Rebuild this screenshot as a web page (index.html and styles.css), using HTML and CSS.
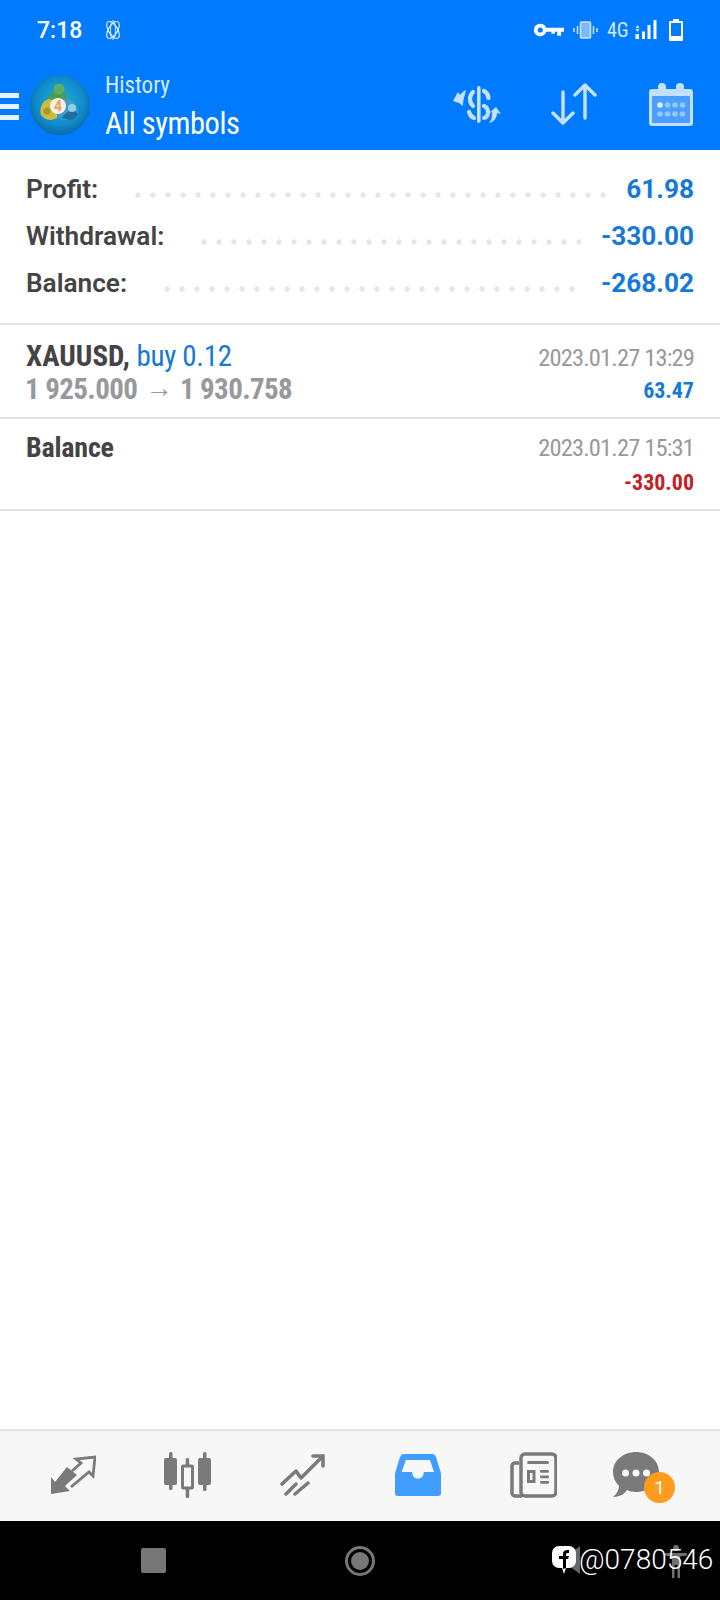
FILE: index.html
```html
<!DOCTYPE html>
<html lang="en">
<head>
<meta charset="UTF-8">
<meta name="viewport" content="width=device-width, initial-scale=1.0">
<title>History</title>
<link rel="stylesheet" href="styles.css">
</head>
<body>
<header class="top">
    <div class="status">
        <span class="time">7:18</span>
        <svg class="atom" width="20" height="20" viewBox="0 0 20 20" fill="none" stroke="#fff" stroke-width="1">
            <ellipse cx="10" cy="10" rx="4.500" ry="9.500" transform="rotate(32 10 10)"/>
            <ellipse cx="10" cy="10" rx="4.500" ry="9.500" transform="rotate(-32 10 10)"/>
            <ellipse cx="10" cy="10" rx="2.500" ry="9.500" opacity="0.8"/>
        </svg>
        <div class="status-right">
            <svg width="30" height="14" viewBox="0 0 31 14" fill="#fff">
                <path d="M6.500 0.500a6.500 6.500 0 0 1 6.100 4.200H31v4h-3V13h-4V8.700h-2.500V11h-3.500V8.700h-5.400A6.500 6.500 0 1 1 6.500 0.500zm0 3.800a2.700 2.700 0 1 0 0 5.400 2.700 2.700 0 0 0 0-5.400z"/>
            </svg>
            <svg width="25" height="18" viewBox="0 0 25 18" fill="none" stroke="#cfe4ff" stroke-width="1.500">
                <rect x="7.500" y="1" width="10" height="16" rx="1" fill="#7db8ff"/>
                <path d="M4.500 5v8M1 7v4M20.500 5v8M24 7v4"/>
            </svg>
            <span class="net">4G</span>
            <svg width="22" height="20" viewBox="0 0 22 20" fill="#fff">
                <path d="M2.500 5l2 3h-4zM2.500 12l-2-3h4z" opacity="0.8"/>
                <rect x="0.500" y="14" width="3.500" height="5"/>
                <rect x="7" y="11.500" width="3" height="7.500"/>
                <rect x="12.500" y="5" width="3" height="14"/>
                <rect x="18.500" y="0" width="3" height="19"/>
            </svg>
            <svg class="batt" width="14" height="22" viewBox="0 0 14 22" fill="none">
                <path d="M4 0h6v2h3a1 1 0 0 1 1 1v18a1 1 0 0 1-1 1H1a1 1 0 0 1-1-1V3a1 1 0 0 1 1-1h3z" fill="#fff"/>
                <rect x="2" y="4" width="10" height="13" fill="#007aff"/>
            </svg>
        </div>
    </div>
    <div class="appbar">
        <div class="burger"><i></i><i></i><i></i></div>
        <svg class="logo" width="60" height="60" viewBox="0 0 60 60">
            <defs>
                <radialGradient id="disc" cx="50%" cy="45%" r="55%">
                    <stop offset="0" stop-color="#27b0dc"/>
                    <stop offset="0.7" stop-color="#0f8ccb"/>
                    <stop offset="1" stop-color="#0b6ca8"/>
                </radialGradient>
            </defs>
            <circle cx="30" cy="30" r="30" fill="url(#disc)"/>
            <path d="M17 30c0-9 5-14 11-14 7 0 12 5 12 14z" fill="#4d9c55"/>
            <circle cx="29" cy="14" r="5.500" fill="#5cae63"/>
            <path d="M11 40c-2-7 1-14 8-16l6 2 3 8-1 9-6 2c-4 0-8-2-10-5z" fill="#cdbb3f"/>
            <circle cx="17" cy="36" r="3.500" fill="#a8962c"/>
            <path d="M32 23c8-1 15 5 16 12 1 6-4 10-9 10-5 0-10-1-12-4l2-12z" fill="#3d9ccb"/>
            <path d="M32 43c2-4 6-7 10-7 3 0 5 1 6 3-2 4-5 6-9 6z" fill="#1f6f9e"/>
            <circle cx="42" cy="33" r="4" fill="#8fd0e8"/>
            <circle cx="28" cy="31" r="8" fill="#f6f0e6"/>
            <text class="logo-four" x="28" y="36" text-anchor="middle">4</text>
        </svg>
        <div class="titles">
            <div class="title-small">History</div>
            <div class="title-big">All symbols</div>
        </div>
        <div class="actions">
            <svg width="48" height="37" viewBox="8 10 48 37">
                <rect x="32" y="10" width="3.600" height="37" rx="1.800" fill="#c4e0ff"/>
                <g fill="none" stroke="#c4e0ff" stroke-width="4.200" stroke-linecap="round">
                    <path d="M28 16C24 20 24 26 28 30"/>
                    <path d="M39 15C41 16 43 18 43.500 22"/>
                    <path d="M24 36C25 39 26 41 29 42"/>
                    <path d="M39 30C43 31 44 37 42 40C41 41 40 42 39 42"/>
                </g>
                <g fill="#c4e0ff">
                    <path d="M21 14C20 19 18 23 18 30L14 27L8 25L13 16L15 19C17 17 18 15 21 14z"/>
                    <path d="M44 47C47 44 47 40 47 36L44 37L51 31L56 38L52 37C52 42 49 46 44 47z"/>
                </g>
            </svg>
            <svg class="updown" width="46" height="42" viewBox="0 0 46 42" fill="none" stroke="#c4e0ff" stroke-width="3.500" stroke-linecap="round" stroke-linejoin="round">
                <path d="M12 9v31M2 30l10 10 10-10"/>
                <path d="M34 2v33M24 12L34 2l10 10"/>
            </svg>
            <svg width="44" height="44" viewBox="0 0 44 44">
                <path d="M3 7h6V5a4 4 0 0 1 8 0v2h10V5a4 4 0 0 1 8 0v2h6a3 3 0 0 1 3 3v31a3 3 0 0 1-3 3H3a3 3 0 0 1-3-3V10a3 3 0 0 1 3-3z" fill="#c4e0ff"/>
                <rect x="3" y="14" width="38" height="27" rx="1" fill="#4a9eff"/>
                <g fill="#94c6ff">
                    <circle cx="11" cy="23" r="2.800" fill="#e0efff"/><circle cx="18.500" cy="23" r="2.800"/><circle cx="26" cy="23" r="2.800"/><circle cx="33.500" cy="23" r="2.800"/>
                    <circle cx="11" cy="32" r="2.800"/><circle cx="18.500" cy="32" r="2.800"/><circle cx="26" cy="32" r="2.800"/><circle cx="33.500" cy="32" r="2.800"/>
                </g>
            </svg>
        </div>
    </div>
</header>

<main class="content">
    <section class="summary">
        <div class="sum-row"><span class="sum-label">Profit:</span><span class="leader"></span><span class="sum-value">61.98</span></div>
        <div class="sum-row"><span class="sum-label">Withdrawal:</span><span class="leader"></span><span class="sum-value">-330.00</span></div>
        <div class="sum-row"><span class="sum-label">Balance:</span><span class="leader"></span><span class="sum-value">-268.02</span></div>
    </section>
    <div class="deal deal-first">
        <div class="deal-left">
            <div class="deal-name"><b>XAUUSD,</b> <span class="blue buy">buy 0.12</span></div>
            <div class="deal-price">1 925.000 <span class="arrow">→</span> 1 930.758</div>
        </div>
        <div class="deal-right">
            <div class="deal-date">2023.01.27 13:29</div>
            <div class="deal-sum blue">63.47</div>
        </div>
    </div>
    <div class="deal deal-second">
        <div class="deal-left">
            <div class="deal-name deal-balance"><b>Balance</b></div>
        </div>
        <div class="deal-right">
            <div class="deal-date">2023.01.27 15:31</div>
            <div class="deal-sum red">-330.00</div>
        </div>
    </div>
</main>

<nav class="tabs">
    <svg width="46" height="40" viewBox="9 10 46 40">
        <path d="M10 32L14 37L26 22L36 30L24 41L29 46L10 49z" fill="#7a7a7a"/>
        <path d="M30 42L48 27L52 31L54 12L35 14L40 18L31 26" fill="none" stroke="#7a7a7a" stroke-width="2.800"/>
    </svg>
    <svg width="48" height="46" viewBox="0 0 48 46" fill="#7a7a7a">
        <rect x="0" y="6" width="13" height="27" rx="2"/><rect x="5" y="0" width="3.500" height="38" rx="1.500"/>
        <rect x="34" y="6" width="13" height="27" rx="2"/><rect x="39" y="0" width="3.500" height="39" rx="1.500"/>
        <rect x="21.700" y="6" width="3.500" height="40" rx="1.500"/>
        <rect x="18.500" y="14" width="10" height="22" rx="1" fill="#f7f7f7" stroke="#7a7a7a" stroke-width="3"/>
    </svg>
    <svg width="46" height="42" viewBox="9 8 46 42" fill="none" stroke="#7a7a7a" stroke-width="3.500" stroke-linecap="round" stroke-linejoin="round">
        <path d="M11 38L25 25L30 32L50 12"/>
        <path d="M42 10H52V20" stroke-linejoin="miter"/>
        <path d="M15 48L25 38M24 48L37 37"/>
    </svg>
    <svg class="inbox" width="46" height="42" viewBox="0 0 46 42">
        <path d="M9 0h28c2 0 3 1 4 3l4 13c.6 2 1 3 1 5v18a3 3 0 0 1-3 3H3a3 3 0 0 1-3-3V21c0-2 .4-3 1-5L5 3c1-2 2-3 4-3z" fill="#3f9eff"/>
        <path d="M11 6h24l4 12H30c-1 0-1.500 .5-1.500 1.500 0 3-2.500 5-5.500 5s-5.500-2-5.500-5c0-1-.5-1.500-1.500-1.500H6.500z" fill="#f7f7f7"/>
    </svg>
    <svg width="48" height="46" viewBox="9 6 48 46">
        <rect x="21" y="8" width="35" height="42" rx="4" fill="none" stroke="#7a7a7a" stroke-width="3.500"/>
        <path d="M19 17H15a3 3 0 0 0-3 3V47a3 3 0 0 0 3 3H22" fill="none" stroke="#7a7a7a" stroke-width="3.500"/>
        <g fill="#7a7a7a">
            <rect x="27" y="15" width="22" height="3" rx="1.500"/>
            <path d="M27 24h8.500v13H27zm3 3v7h2.500v-7z" fill-rule="evenodd"/>
            <rect x="40" y="24" width="9" height="2.700" rx="1.300"/><rect x="40" y="29.500" width="9" height="2.700" rx="1.300"/><rect x="40" y="35" width="9" height="2.700" rx="1.300"/>
        </g>
    </svg>
    <div class="chat">
        <svg width="46" height="46" viewBox="0 0 46 46">
            <path d="M23 0c12.500 0 23 8.500 23 20s-10.500 20-23 20c-4 0-7-1-9-2-2 3-6 7-14 7 3-2 6-7 6-11C2 30 0 25 0 20 0 8.500 10.500 0 23 0z" fill="#7a7a7a"/>
            <circle cx="12.500" cy="21" r="3.500" fill="#f7f7f7"/><circle cx="23" cy="21" r="3.500" fill="#f7f7f7"/><circle cx="33.500" cy="21" r="3.500" fill="#f7f7f7"/>
        </svg>
        <span class="badge">1</span>
    </div>
</nav>

<footer class="sysnav">
    <span class="sys-square"></span>
    <span class="sys-home"><i></i></span>
    <svg class="sys-back" width="24" height="30" viewBox="0 0 24 30"><path d="M22 1v28L3 15z" fill="#666"/></svg>
    <svg class="sys-person" width="22" height="34" viewBox="0 0 22 34" fill="#6f6f6f"><circle cx="11" cy="3" r="3"/><path d="M0 8h22v2.500l-7 1V33h-2.500V20h-3v13H7V11.500l-7-1z"/></svg>
    <div class="mark">
        <svg width="24" height="28" viewBox="0 0 24 28">
            <path d="M7 0h10a7 7 0 0 1 7 7v8a7 7 0 0 1-7 7h-3l-2 6-2-6H7a7 7 0 0 1-7-7V7a7 7 0 0 1 7-7z" fill="#fff"/>
            <path d="M11 23V13H7v-3h4V8c0-3 2-4.500 6-4v3c-2 0-3 0-3 2v1h3l-1 3h-2v9z" fill="#000"/>
        </svg>
        <span>@0780546</span>
    </div>
</footer>
</body>
</html>
```

FILE: styles.css
```css
* {
    box-sizing: border-box;
}

body {
    margin: 0;
    height: 1600px;
    display: flex;
    flex-direction: column;
    font-family: Roboto, "Liberation Sans", sans-serif;
    background-color: #fff;
    color: #444;
}

.top {
    height: 150px;
    background-color: #007aff;
    color: #fff;
    flex: none;
}

.status {
    height: 60px;
    display: flex;
    align-items: center;
    padding: 0 37px 0 37px;
}

.time {
    font-size: 23px;
    font-weight: 500;
    width: 66px;
}

.status-right {
    margin-left: auto;
    display: flex;
    align-items: center;
    gap: 9px;
}

.net {
    font-size: 20px;
    font-stretch: condensed;
    width: 19px;
    color: #d6e9ff;
}

.batt {
    margin-left: 3px;
}

.appbar {
    height: 90px;
    display: flex;
    align-items: flex-start;
    padding-top: 11px;
}

.burger {
    width: 19px;
    margin: 22px 11px 0 0;
    display: flex;
    flex-direction: column;
    gap: 6px;
}

.burger i {
    display: block;
    height: 5px;
    background-color: #e6f2ff;
}

.logo {
    margin-top: 4px;
}

.titles {
    margin-left: 15px;
}

.title-small {
    margin-top: 1px;
    font-size: 23px;
    line-height: 27px;
    font-stretch: condensed;
    color: #d8eaff;
}

.title-big {
    margin-top: 3px;
    font-size: 30.500px;
    line-height: 44px;
    font-stretch: condensed;
    letter-spacing: -0.450px;
}

.logo-four {
    font-family: Roboto, sans-serif;
    font-size: 14px;
    font-weight: 700;
    fill: #f0a050;
}

.actions {
    margin-left: auto;
    margin-right: 27px;
    margin-top: 11px;
    display: flex;
    align-items: center;
    gap: 50px;
}

.updown {
    margin-right: 2px;
}

.content {
    flex: 1;
}

.summary {
    height: 175px;
    padding: 15px 26px 0 26px;
    border-bottom: 2px solid #e2e2e2;
}

.sum-row {
    height: 47px;
    display: flex;
    align-items: center;
    font-size: 26.200px;
    font-weight: 600;
}

.sum-label {
    color: #444;
}

.sum-value {
    font-size: 26.200px;
    color: #1678d8;
    font-weight: 700;
}

.leader {
    flex: 1;
    height: 6px;
    margin: 13px 20px 0 37px;
    background-image: radial-gradient(circle at 3px 3px, #e6e6e6 2.300px, transparent 3px);
    background-size: 15px 6px;
    background-repeat: repeat-x;
}

.deal {
    height: 92px;
    display: flex;
    justify-content: space-between;
    padding: 13px 26px 0 26px;
    border-bottom: 2px solid #e2e2e2;
}

.deal-first {
    height: 94px;
}

.deal-second {
    padding-top: 11px;
}

.deal-second .deal-date {
    margin-top: 0;
}

.deal-second .deal-sum {
    margin-top: 2px;
}

.deal-name {
    font-size: 29px;
    line-height: 36px;
    font-stretch: condensed;
}

.deal-balance {
    font-size: 28px;
    letter-spacing: -0.200px;
}

.buy {
    letter-spacing: -0.300px;
}

.deal-price {
    margin-left: -1px;
    font-size: 29px;
    line-height: 30px;
    font-weight: 700;
    font-stretch: condensed;
    letter-spacing: -0.600px;
    color: #97999c;
}

.arrow {
    font-size: 27px;
    font-weight: 400;
    margin: 0 2px;
    position: relative;
    top: -2px;
}

.blue {
    color: #1678d8;
}

.red {
    color: #c22024;
}

.deal-right {
    text-align: right;
}

.deal-date {
    font-size: 24.500px;
    line-height: 36px;
    margin-top: 2px;
    font-stretch: condensed;
    letter-spacing: -0.850px;
    color: #999;
}

.deal-sum {
    font-size: 22px;
    line-height: 30px;
    font-weight: 700;
    font-stretch: condensed;
}

.tabs {
    height: 92px;
    flex: none;
    background-color: #f7f7f7;
    border-top: 2px solid #e4e4e4;
    display: flex;
    align-items: center;
    gap: 68px;
    padding: 0 0 3px 50px;
}

.inbox {
    margin-left: 1px;
}

.chat {
    position: relative;
    height: 46px;
    margin-left: -12px;
}

.badge {
    position: absolute;
    left: 31px;
    top: 20px;
    width: 31px;
    height: 31px;
    border-radius: 50%;
    background-color: #ff9c1e;
    color: #fff;
    font-size: 19px;
    line-height: 31px;
    text-align: center;
}

.sysnav {
    height: 79px;
    flex: none;
    background-color: #000;
    position: relative;
    display: flex;
    align-items: center;
    padding-left: 141px;
}

.sys-square {
    width: 25px;
    height: 25px;
    border-radius: 2px;
    background-color: #777;
}

.sys-home {
    width: 30px;
    height: 30px;
    margin-left: 179px;
    border: 3px solid #777;
    border-radius: 50%;
    display: flex;
    align-items: center;
    justify-content: center;
}

.sys-home i {
    width: 18px;
    height: 18px;
    border-radius: 50%;
    background-color: #777;
}

.sys-back {
    position: absolute;
    left: 558px;
    top: 24px;
}

.sys-person {
    position: absolute;
    left: 665px;
    top: 24px;
}

.mark {
    position: absolute;
    left: 552px;
    top: 22px;
    display: flex;
    align-items: center;
    gap: 3px;
    color: #fff;
    font-size: 28px;
    font-weight: 300;
}
```
